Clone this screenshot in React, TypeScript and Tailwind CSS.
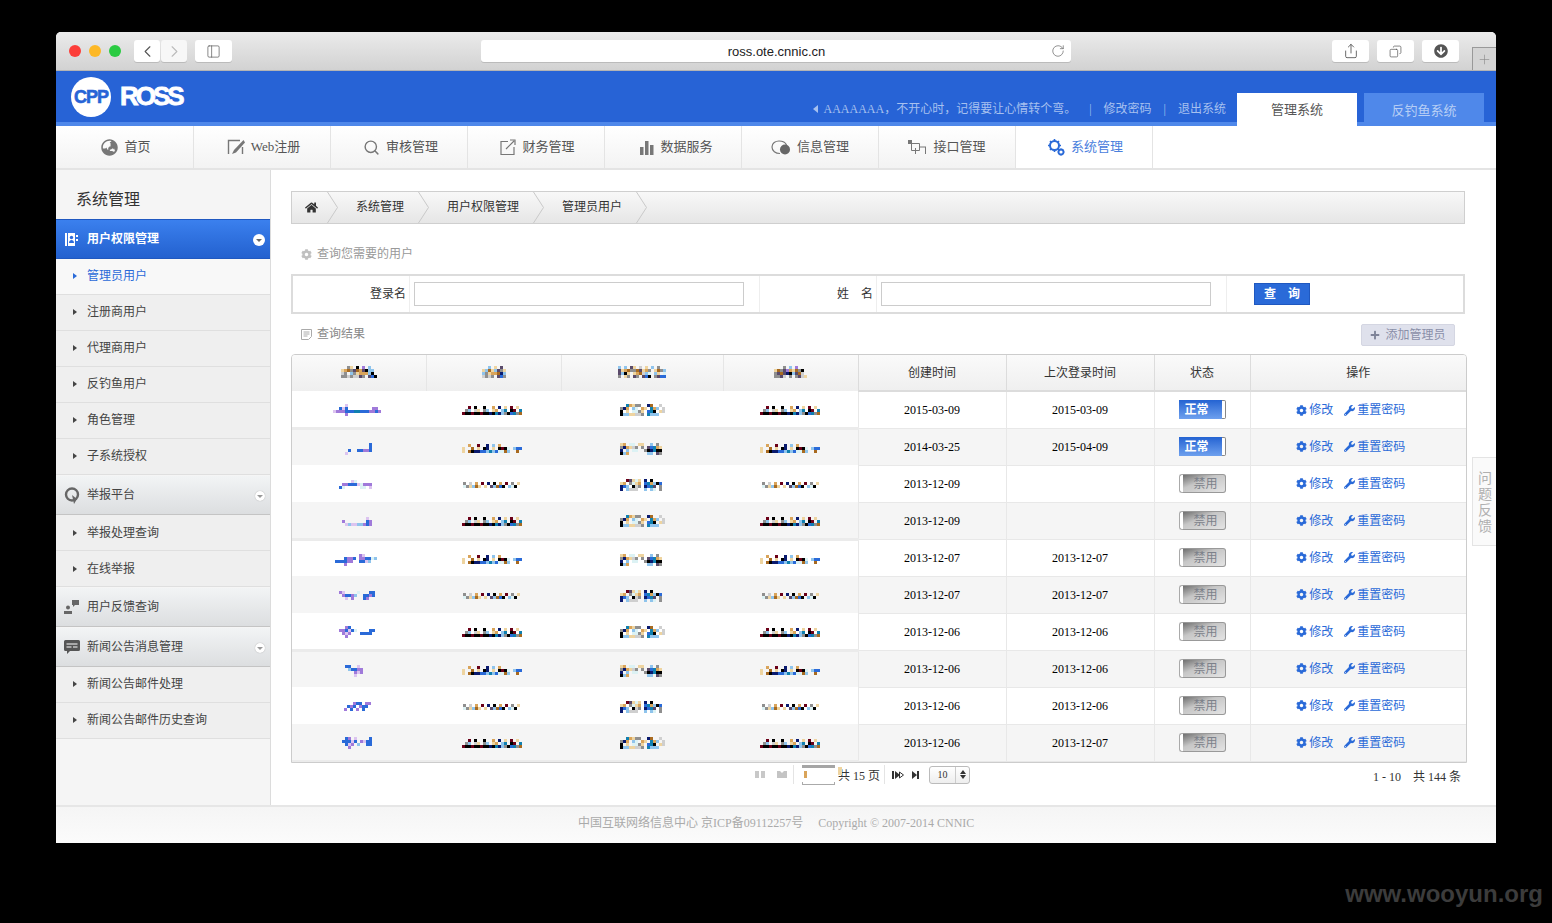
import { ChevronLeft, ChevronRight, Copy, PanelLeft, Plus, RotateCw, Search, Share } from 'lucide-react';
import { FaArrowCircleDown, FaCog, FaGlobeAsia, FaHome, FaPlus, FaWrench } from 'react-icons/fa';

const COLORS: Record<string, string> = {
  k: '#000000', r: '#6a0018', n: '#0a1a6e', b: '#2a6ad8', l: '#8fc4ec', o: '#d9a45a', O: '#a86a20',
  t: '#eed4a0', g: '#8f8f8f', G: '#cfcfcf', p: '#a07ada', P: '#dcc4f0', c: '#dcf2f4', w: '#1080b0', m: '#5a4a6a',
};

const DARK = ['..r.k..k..o.n.t.r.t.', '.gl.Gt.gl.to.lw.kr.w', 'rkkrkkrkknkwnlgkbwgO'];
const SPARSE = ['..o..r..n.l.o.......', 't..O.t.kn.t.krkc.lbb', 't.OknnbblwlbccOl..O.'];
const SMALL = ['g.G.o.r.n.k.o.r.g.t', 'cgtlOt.t.mlObk.lck.'];
const A = ['..wotgg..nO..G.', 'gno.lc.ot.wol.G', 'k.t.ccgt.bwk.tG', 'kllttGGg.wlll..'];
const B = ['to.cc.tt..l.g..', 'gnotGg.g.mbwot.', 'n.l.cc..gknwkk.', 'klo......ll.mg.'];
const C = ['..rmtct.n.k....', 'to.gcto.bwolkb.', 'nbl.kGg.nbwm.g.', 'n.lGGG..l.lc.g.'];
const HEAD1 = ['..gt.k.p.l..', 'toOgmOomkll.', 'Gg.lgtooolk.', 'ggGgGGmg.mbk'];
const HEAD2 = ['..l.t.m.', 'tlOtlmgt', 'lgtooOnl', 'GgGg.mbg'];
const HEAD3 = ['l.l.mt.G.t.l.g..', 'mtoOggOmtog.tOgl', 'mlkt.toOGlc.lt.c', 'g.tg.mg.mbk.gmbb'];
const HEAD4 = ['...g.l.p...', 'tOgmpotOgk.', 'gmOmnklmOG.', 'ggmG.g.gmGt'];
const NAMES = [
  ['....P...........', '..bPb........pp.', 'Ppppbbbwwbbbppbp', '....p...........'],
  ['.........b', '.........b', '..b..bbppb', '.P.......'],
  ['....Pc......', '.ppbbbPcppp.', 'bc.....cc.P.'],
  ['........P.', 'p.......bp', '.PlPPllpbp'],
  ['........pP.....', '...bppb.ppbbcl', 'bbbbpp..bbPl', '...p....'],
  ['pP....c...bb', '.pbbpl..bbpb', '..P.p...bp'],
  ['..pb.......', 'ppbPbc....bb', '.pPp...bbbb', '..p....'],
  ['bb..P...', '.lbbpp..', '...pPp..', '...P..'],
  ['...pbb.pp', '.bpb.pbb', 'p.b.p.b'],
  ['.bp.P....b', 'bbbPb.pPbb', '.bPp.l..bb', '..p.......'],
];

function Mosaic({ rows }: { rows: string[] }) {
  const w = Math.max(...rows.map((r) => r.length)) * 3;
  return (
    <svg width={w} height={rows.length * 3} shapeRendering="crispEdges" className="inline-block align-middle">
      {rows.map((row, y) =>
        row.split('').map((ch, x) =>
          COLORS[ch] ? <rect key={`${x}-${y}`} x={x * 3} y={y * 3} width={3} height={3} fill={COLORS[ch]} /> : null,
        ),
      )}
    </svg>
  );
}

const NAV = ['首页', 'Web注册', '审核管理', '财务管理', '数据服务', '信息管理', '接口管理', '系统管理'];

function NavIcon({ i }: { i: number }) {
  if (i === 0) return <FaGlobeAsia className="h-[17px] w-[17px] text-[#777]" />;
  if (i === 1)
    return (
      <svg width="18" height="16" viewBox="0 0 18 16" fill="none" stroke="#777">
        <path d="M13 1.5H1.5V15" strokeWidth="1.4" />
        <path d="M16.5 1 7 11l-2 4 4-1.500 9-10z" fill="#777" stroke="none" />
        <path d="M15.500 8v7" strokeWidth="1.400" />
      </svg>
    );
  if (i === 2) return <Search className="h-[17px] w-[17px] text-[#777]" strokeWidth={2} />;
  if (i === 3)
    return (
      <svg width="16" height="16" viewBox="0 0 16 16" fill="none" stroke="#777" strokeWidth="1.200">
        <path d="M8 2.500H1v13h13V8" />
        <path d="M6 10l8-8M10 1h5v5" />
      </svg>
    );
  if (i === 4)
    return (
      <svg width="14" height="15" viewBox="0 0 14 15" fill="#777">
        <rect x="0" y="7" width="3.500" height="8" />
        <rect x="5" y="1" width="3.500" height="14" />
        <rect x="10" y="5" width="3.500" height="10" />
      </svg>
    );
  if (i === 5)
    return (
      <svg width="20" height="15" viewBox="0 0 20 15">
        <path d="M9 13.500c-4.500 0-8-2.500-8-6.500s3.500-6 7-6 6.500 1.500 7.500 4" fill="none" stroke="#777" strokeWidth="1.200" />
        <circle cx="14" cy="9.500" r="5" fill="#666" />
      </svg>
    );
  if (i === 6)
    return (
      <svg width="19" height="15" viewBox="0 0 19 15" fill="none" stroke="#777">
        <rect x="0" y="0" width="4" height="4" fill="#777" stroke="none" />
        <path d="M3.500 3.500h8v7h-8zM12 7h6M17.500 7v7M7.500 8v6" />
      </svg>
    );
  return (
    <svg width="17" height="17" viewBox="0 0 17 17" fill="none" stroke="#2a6ad8">
      <circle cx="6.500" cy="6.500" r="4.500" strokeWidth="2" />
      <path d="M6.500 0v2M6.500 11v2M0 6.500h2M11 6.500h2M2 2l1.400 1.400M9.600 9.600 11 11M11 2 9.600 3.400M2 11l1.400-1.400" strokeWidth="1.600" />
      <circle cx="13" cy="13" r="2.500" strokeWidth="1.800" />
      <path d="M13 9.500v1M13 15.500v1M9.500 13h1M15.500 13h1" strokeWidth="1.200" />
    </svg>
  );
}

function SideItem({ label, active, low }: { label: string; active?: boolean; low?: boolean }) {
  return (
    <div className={`flex h-9 items-center border-b border-[#dfdfdf] pl-[17px] ${low ? '' : 'pb-[2px]'} ${active ? 'bg-[#f8f8f8] text-[#2a6ad8]' : 'bg-[#efefef] text-[#444]'}`}>
      <span className={`mr-[10px] h-0 w-0 border-y-[3px] border-l-[4px] border-y-transparent ${active ? 'border-l-[#2a6ad8]' : 'border-l-[#444]'}`} />
      {label}
    </div>
  );
}

function Minus({ blue }: { blue?: boolean }) {
  return (
    <span className={`ml-auto mr-[5px] mt-[2px] flex items-center justify-center rounded-full bg-white ${blue ? 'h-3 w-3' : 'h-[10px] w-[10px] shadow-[0_0_1px_#999]'}`}>
      <span className={`h-0 w-0 border-x-[3px] border-t-[3px] border-x-transparent ${blue ? 'border-t-[#666]' : 'border-t-[#999]'}`} />
    </span>
  );
}

function SideHead({ label, icon, caret }: { label: string; icon: React.ReactNode; caret?: boolean }) {
  return (
    <div className="mt-px flex h-[39px] items-center border-b border-[#c4c4c4] bg-gradient-to-b from-[#f2f4f5] to-[#dcdee0] text-[#444]">
      <span className="flex w-[31px] justify-center">{icon}</span>
      {label}
      {caret && <Minus />}
    </div>
  );
}

function Crumb({ children, w }: { children: React.ReactNode; w: number }) {
  return (
    <div className="flex h-full items-center" style={{ width: w }}>
      <span className="flex-1 pb-[2px] pl-[4px] text-center text-[#333]">{children}</span>
      <svg width="11" height="31" viewBox="0 0 11 31" fill="none" stroke="#c9c9c9" className="shrink-0">
        <path d="M0.500 0 10.500 15.500 0.500 31" />
      </svg>
    </div>
  );
}

function Status({ on }: { on: boolean }) {
  if (on) {
    return (
      <span className="inline-flex h-[19px] w-[47px] items-center align-middle">
        <span className="flex h-full w-[43px] items-center justify-center bg-gradient-to-b from-[#2463d2] to-[#6ea0ee] pr-[7px] font-bold text-white">正常</span>
        <span className="h-full w-1 rounded-r-[2px] border border-l-0 border-[#888] bg-white" />
      </span>
    );
  }
  return (
    <span className="inline-flex h-[19px] w-[47px] items-center align-middle">
      <span className="h-full w-1 rounded-l-[3px] border border-r-0 border-[#aaa] bg-white" />
      <span className="flex h-full flex-1 items-center justify-center rounded-r-[3px] border border-l-0 border-[#999] bg-gradient-to-br from-[#707070] via-[#c6c6c6] via-40% to-[#e4e4e4] pl-[4px] text-[#7c818a]">禁用</span>
    </span>
  );
}

const ROWS = [
  ['2015-03-09', '2015-03-09', true],
  ['2014-03-25', '2015-04-09', true],
  ['2013-12-09', '', false],
  ['2013-12-09', '', false],
  ['2013-12-07', '2013-12-07', false],
  ['2013-12-07', '2013-12-07', false],
  ['2013-12-06', '2013-12-06', false],
  ['2013-12-06', '2013-12-06', false],
  ['2013-12-06', '2013-12-06', false],
  ['2013-12-06', '2013-12-07', false],
] as const;

export default function App() {
  return (
    <div className="relative h-screen w-full overflow-hidden bg-black px-14 pt-8 font-['Liberation_Serif','Noto_Sans_CJK_SC',serif] text-xs">
      <div className="flex h-[811px] flex-col overflow-hidden rounded-t-[5px] bg-white">
        {/* Safari toolbar */}
        <div className="flex h-[39px] shrink-0 items-center border-b border-[#b4b4b4] bg-gradient-to-b from-[#ebebeb] to-[#d2d2d2] pl-[13px]">
          <span className="h-3 w-3 rounded-full bg-[#fc3d39]" />
          <span className="ml-2 h-3 w-3 rounded-full bg-[#fdb826]" />
          <span className="ml-2 h-3 w-3 rounded-full bg-[#2acb42]" />
          <span className="ml-[13px] flex h-[22px] w-[26px] items-center justify-center rounded-[3px] bg-white shadow-[0_1px_0_#bbb]">
            <ChevronLeft className="h-[19px] w-[19px] text-[#555]" strokeWidth={1.4} />
          </span>
          <span className="ml-px flex h-[22px] w-[26px] items-center justify-center rounded-[3px] bg-[#f7f7f7] shadow-[0_1px_0_#bbb]">
            <ChevronRight className="h-[19px] w-[19px] text-[#bbb]" strokeWidth={1.4} />
          </span>
          <span className="ml-2 flex h-[22px] w-[37px] items-center justify-center rounded-[3px] bg-white shadow-[0_1px_0_#bbb]">
            <PanelLeft className="h-[15px] w-[15px] text-[#555]" strokeWidth={1.1} />
          </span>
          <div className="relative ml-[249px] flex h-[22px] w-[590px] items-center justify-center rounded-[3px] bg-white pl-[1px] pt-[2px] font-['Liberation_Sans',sans-serif] text-[13px] text-[#222] shadow-[0_1px_0_#bbb]">
            ross.ote.cnnic.cn
            <RotateCw className="absolute right-[6px] top-[4px] h-[14px] w-[14px] text-[#666]" strokeWidth={1.2} />
          </div>
          <span className="ml-[261px] flex h-[22px] w-[37px] items-center justify-center rounded-[3px] bg-white shadow-[0_1px_0_#bbb]">
            <Share className="h-4 w-4 text-[#555]" strokeWidth={1.3} />
          </span>
          <span className="ml-2 flex h-[22px] w-[37px] items-center justify-center rounded-[3px] bg-white shadow-[0_1px_0_#bbb]">
            <Copy className="h-[13px] w-[13px] -scale-x-100 text-[#555]" strokeWidth={1.3} />
          </span>
          <span className="ml-2 flex h-[22px] w-[37px] items-center justify-center rounded-[3px] bg-white shadow-[0_1px_0_#bbb]">
            <FaArrowCircleDown className="h-[14px] w-[14px] text-[#555]" />
          </span>
          <span className="ml-[13px] mt-[15px] flex h-[23px] w-6 items-center justify-center border-l border-t border-[#999] bg-[#d4d4d4]">
            <Plus className="h-[15px] w-[15px] text-[#888]" strokeWidth={1} />
          </span>
        </div>

        {/* Blue header */}
        <div className="flex h-[55px] shrink-0 border-b-4 border-[#4f88ea] bg-[#2763d6]">
          <div className="ml-[15px] mt-[6px] flex h-10 w-10 items-center justify-center rounded-full bg-white font-['Liberation_Sans',sans-serif] text-[18px] font-black tracking-[-1px] text-[#2763d6] [-webkit-text-stroke:0.6px_#2763d6]">
            CPP
          </div>
          <div className="ml-[9px] mt-[11px] h-7 font-['Liberation_Sans',sans-serif] text-[26px] font-black leading-7 tracking-[-3px] text-white [-webkit-text-stroke:0.8px_#fff]">
            ROSS
          </div>
          <div className="ml-auto mt-[22px] flex h-[29px] items-center pt-[3px] text-[#a6c0ef]">
            <span className="mr-[5px] h-0 w-0 border-y-[4px] border-r-[5px] border-y-transparent border-r-[#a6c0ef]" />
            <span>AAAAAAA，不开心时，记得要让心情转个弯。</span>
            <span className="ml-[13px] mr-[12px]">|</span>
            <span>修改密码</span>
            <span className="mx-[12px]">|</span>
            <span>退出系统</span>
          </div>
          <div className="ml-[11px] mt-[22px] flex h-[33px] w-[120px] items-center justify-center bg-white pt-[1px] text-[13px] text-[#555]">管理系统</div>
          <div className="ml-[7px] mr-3 mt-[22px] flex h-[29px] w-[120px] items-center justify-center bg-[#4f88ea] pt-[6px] text-[13px] text-[#b8cff5]">反钓鱼系统</div>
        </div>

        {/* Top nav */}
        <div className="flex h-[44px] shrink-0 border-b-2 border-[#e4e4e4] text-[13px]">
          {NAV.map((label, i) => (
            <div
              key={label}
              className={`flex h-full items-center justify-center gap-[6px] border-r border-[#e4e4e4] ${i === 0 ? 'w-[138px]' : 'w-[137px]'} ${i === 4 ? 'pl-[7px]' : i === 5 || i === 6 ? '' : 'pl-[3px]'} ${i === 7 ? 'bg-white text-[#4a80dd]' : 'bg-gradient-to-b from-white to-[#f3f3f3] text-[#555]'}`}
            >
              <NavIcon i={i} />
              {label}
            </div>
          ))}
        </div>

        <div className="relative flex min-h-0 flex-1">
          {/* Sidebar */}
          <aside className="w-[215px] shrink-0 border-r border-[#dcdcdc] bg-[#f5f5f5]">
            <div className="flex h-[49px] items-center pl-[20px] pt-[10px] text-[16px] text-[#333]">系统管理</div>
            <div className="flex h-10 items-center border-y border-[#1f58c0] bg-gradient-to-b from-[#3b80ee] to-[#2361cf] font-bold text-white">
              <span className="flex w-[31px] justify-center">
                <svg width="13" height="13" viewBox="0 0 13 13">
                  <path d="M0 0h2v13H0zM3 0h7v13H3z" fill="#fff" />
                  <circle cx="6.500" cy="4.500" r="1.700" fill="#2c6bdc" />
                  <path d="M4 10c0-4 5-4 5 0z" fill="#2c6bdc" />
                  <path d="M11 2h2v2h-2zM11 6h2v2h-2z" fill="#fff" />
                </svg>
              </span>
              用户权限管理
              <Minus blue />
            </div>
            <SideItem label="管理员用户" active />
            <SideItem label="注册商用户" />
            <SideItem label="代理商用户" />
            <SideItem label="反钓鱼用户" />
            <SideItem label="角色管理" />
            <SideItem label="子系统授权" />
            <SideHead
              label="举报平台"
              caret
              icon={
                <svg width="16" height="17" viewBox="0 0 16 17" fill="none" stroke="#666" strokeWidth="2.400">
                  <circle cx="8" cy="7.500" r="6" />
                  <path d="M8 8l2 9 3-5z" fill="#666" stroke="none" />
                </svg>
              }
            />
            <SideItem label="举报处理查询" low />
            <SideItem label="在线举报" low />
            <SideHead
              label="用户反馈查询"
              icon={
                <svg width="15" height="14" viewBox="0 0 15 14" fill="#666">
                  <circle cx="4" cy="7.500" r="2" />
                  <path d="M0 11h8v3H0zM8 0h7v5h-4l-2 2V5H8z" />
                </svg>
              }
            />
            <SideHead
              label="新闻公告消息管理"
              caret
              icon={
                <svg width="16" height="15" viewBox="0 0 16 15">
                  <path d="M1.500 0h13A1.500 1.500 0 0 1 16 1.500v8a1.500 1.500 0 0 1-1.500 1.500H6l-3 3v-3H1.500A1.500 1.500 0 0 1 0 9.500v-8A1.500 1.500 0 0 1 1.500 0z" fill="#555" />
                  <path d="M2.500 4h11M2.500 7h5M9 7h4.500" stroke="#fff" />
                </svg>
              }
            />
            <SideItem label="新闻公告邮件处理" />
            <SideItem label="新闻公告邮件历史查询" />
          </aside>

          {/* Main */}
          <main className="flex min-w-0 flex-1 flex-col pl-5 pt-[21px]">
            <div className="flex h-[33px] w-[1174px] shrink-0 items-center border border-[#cfcfcf] bg-gradient-to-b from-[#f8f8f8] to-[#e6e6e6]">
              <Crumb w={46}>
                <FaHome className="inline h-[13px] w-[13px] text-[#333]" />
              </Crumb>
              <Crumb w={91}>系统管理</Crumb>
              <Crumb w={115}>用户权限管理</Crumb>
              <Crumb w={103}>管理员用户</Crumb>
            </div>

            <div className="mt-5 flex h-5 shrink-0 items-center pl-[10px] text-[#999]">
              <FaCog className="mr-[5px] h-[11px] w-[11px] text-[#c0c0c0]" />
              查询您需要的用户
            </div>

            <div className="mt-[10px] flex h-10 w-[1174px] shrink-0 border-2 border-[#dcdcdc] text-[#333]">
              <div className="flex w-[117px] items-center justify-end border-r border-[#eee] pr-[3px]">登录名</div>
              <div className="flex w-[350px] items-center border-r border-[#eee] pl-1">
                <input className="h-6 w-[330px] border border-[#ccc] bg-white" />
              </div>
              <div className="flex w-[117px] items-center justify-end border-r border-[#eee] pr-[3px]">姓&nbsp;&nbsp;&nbsp;&nbsp;名</div>
              <div className="flex w-[350px] items-center border-r border-[#eee] pl-1">
                <input className="h-6 w-[330px] border border-[#ccc] bg-white" />
              </div>
              <div className="flex flex-1 items-center pl-[27px]">
                <span className="flex h-[22px] w-[56px] items-center justify-center border border-[#1f58c0] bg-[#2a6ad8] font-bold text-white">查&nbsp;&nbsp;&nbsp;&nbsp;询</span>
              </div>
            </div>

            <div className="mt-[10px] flex h-[22px] w-[1164px] shrink-0 items-center pl-[10px] text-[#888]">
              <svg width="11" height="11" viewBox="0 0 11 11" fill="none" stroke="#aaa" className="mb-[2px] mr-[5px]">
                <path d="M0.500 0.500h10v7l-3 3h-7zM2.500 3h6M2.500 5h6M2.500 7h4" />
              </svg>
              <span className="mb-[2px]">查询结果</span>
              <span className="ml-auto flex h-[22px] w-[94px] items-center justify-center gap-[5px] rounded-[2px] border border-[#d4d6e2] bg-[#dfe1ec] text-[#8a8fa8]">
                <FaPlus className="h-[10px] w-[10px] text-[#7e8398]" />
                添加管理员
              </span>
            </div>

            <div className="mt-2 h-[409px] w-[1176px] shrink-0 overflow-hidden rounded-t-[4px] border border-[#cccccc]">
              <table className="w-full table-fixed border-collapse text-[#333]">
                <colgroup>
                  <col className="w-[134px]" />
                  <col className="w-[135px]" />
                  <col className="w-[162px]" />
                  <col className="w-[135px]" />
                  <col className="w-[148px]" />
                  <col className="w-[148px]" />
                  <col className="w-[96px]" />
                  <col />
                </colgroup>
                <thead>
                  <tr className="h-[36px] bg-gradient-to-b from-[#fafafa] to-[#efefef]">
                    <th className="border-r border-[#e6e6e6] pb-1 font-normal"><Mosaic rows={HEAD1} /></th>
                    <th className="border-r border-[#e6e6e6] pb-1 font-normal"><Mosaic rows={HEAD2} /></th>
                    <th className="border-r border-[#e6e6e6] pb-1 font-normal"><Mosaic rows={HEAD3} /></th>
                    <th className="pb-1 font-normal"><Mosaic rows={HEAD4} /></th>
                    <th className="border-b-2 border-l border-r border-[#dcdcdc] font-normal">创建时间</th>
                    <th className="border-b-2 border-r border-[#dcdcdc] font-normal">上次登录时间</th>
                    <th className="border-b-2 border-r border-[#dcdcdc] font-normal">状态</th>
                    <th className="border-b-2 border-[#dcdcdc] font-normal">操作</th>
                  </tr>
                </thead>
                <tbody>
                  {ROWS.map(([created, last, on], i) => {
                    const band = i % 3 === 0 ? 'border-b-[3px] border-[#ebebeb]' : '';
                    const dark = i % 3 === 0 ? DARK : i % 3 === 1 ? SPARSE : SMALL;
                    const mid = i % 3 === 0 ? A : i % 3 === 1 ? B : C;
                    return (
                      <tr key={i} className={`h-[37px] ${i % 2 === 1 ? 'bg-[#f5f5f5]' : 'bg-white'}`}>
                        <td className={`pr-1 text-center ${band}`}><Mosaic rows={NAMES[i]} /></td>
                        <td className={`pr-1 text-center ${band}`}><Mosaic rows={dark} /></td>
                        <td className={`text-center ${band}`}><Mosaic rows={mid} /></td>
                        <td className={`text-center ${band}`}><Mosaic rows={dark} /></td>
                        <td className="border border-[#e8e8e8] text-center text-black">{created}</td>
                        <td className="border border-[#e8e8e8] text-center text-black">{last}</td>
                        <td className="border border-[#e8e8e8] text-center"><Status on={on} /></td>
                        <td className="border-y border-[#e8e8e8] pr-[15px] pt-[2px] text-center text-[#2a6ad8]">
                          <span className="inline-flex items-center">
                            <FaCog className="mr-[2px] h-[11px] w-[11px]" />
                            修改
                            <FaWrench className="ml-[11px] mr-[2px] h-[11px] w-[11px]" />
                            重置密码
                          </span>
                        </td>
                      </tr>
                    );
                  })}
                </tbody>
              </table>
            </div>

            {/* Pagination */}
            <div className="mt-px flex h-[21px] w-[1170px] shrink-0 items-center pl-[464px] text-[#333]">
              <span className="flex w-[10px] justify-between"><i className="h-[7px] w-[4px] bg-[#c8c8c8]" /><i className="h-[7px] w-[4px] bg-[#c8c8c8]" /></span>
              <svg width="10" height="7" viewBox="0 0 10 7" fill="#c4c4c4" className="ml-3">
                <path d="M0 0h3l2 2 2-2h3v7H0z" />
              </svg>
              <span className="ml-[6px] h-[19px] w-px bg-[#e4e4e4]" />
              <span className="relative ml-2 flex h-[20px] w-[33px] flex-col">
                <i className="h-[3px] bg-[#a5a5a5]" />
                <span className="flex flex-1 items-center pl-[2px]"><i className="h-[7px] w-[3px] bg-[#d9a45a]" /></span>
                <i className="h-[3px] border-x border-b border-[#aaa]" />
                <i className="absolute left-[36px] top-[2px] z-10 h-2 w-[4px] bg-[#eed4a0]" />
              </span>
              <span className="ml-[3px] pt-[2px]">共 15 页</span>
              <span className="ml-[4px] h-[19px] w-px bg-[#e4e4e4]" />
              <svg width="32" height="8" viewBox="0 0 32 8" fill="#333" className="ml-[7px]">
                <path d="M0 0h2v8H0zM3 0l5 4-5 4z" />
                <path d="M7.500 1l4 3-4 3z" fill="none" stroke="#333" />
                <path d="M20 0l5 4-5 4zM25 0h2v8h-2z" />
              </svg>
              <span className="ml-[5px] flex h-[18px] w-[41px] items-center rounded-[3px] border border-[#bbb] bg-gradient-to-b from-[#fff] to-[#eee] text-[10px]">
                <span className="w-[25px] text-center">10</span>
                <span className="flex h-full flex-1 flex-col items-center justify-center gap-px border-l border-[#ccc]">
                  <i className="h-0 w-0 border-x-[3px] border-b-[4px] border-x-transparent border-b-[#333]" />
                  <i className="h-0 w-0 border-x-[3px] border-t-[4px] border-x-transparent border-t-[#333]" />
                </span>
              </span>
              <span className="ml-auto pt-[4px]">1 - 10&nbsp;&nbsp;&nbsp;&nbsp;共 144 条</span>
            </div>
          </main>

          {/* Feedback tab */}
          <div className="absolute right-0 top-[287px] flex h-[89px] w-6 items-center justify-center border border-r-0 border-[#e4e4e4] bg-[#fafafa] pl-[1px] font-['Liberation_Sans','Noto_Sans_CJK_SC',sans-serif] text-[14px] leading-[16px] text-[#b0b0b0]">
            问<br />题<br />反<br />馈
          </div>
        </div>

        <div className="flex h-[38px] shrink-0 items-center border-t-2 border-[#e6e6e6] bg-gradient-to-b from-[#f5f5f5] to-[#fbfbfb] pb-[5px] pl-[522px] text-[#aaa]">
          <span>中国互联网络信息中心 京ICP备09112257号</span>
          <span className="ml-[15px]">Copyright © 2007-2014 CNNIC</span>
        </div>
      </div>

      <div className="absolute bottom-[15px] right-[9px] font-['Liberation_Sans',sans-serif] text-[24px] font-bold leading-7 text-[#3c3c3c]">www.wooyun.org</div>
    </div>
  );
}
